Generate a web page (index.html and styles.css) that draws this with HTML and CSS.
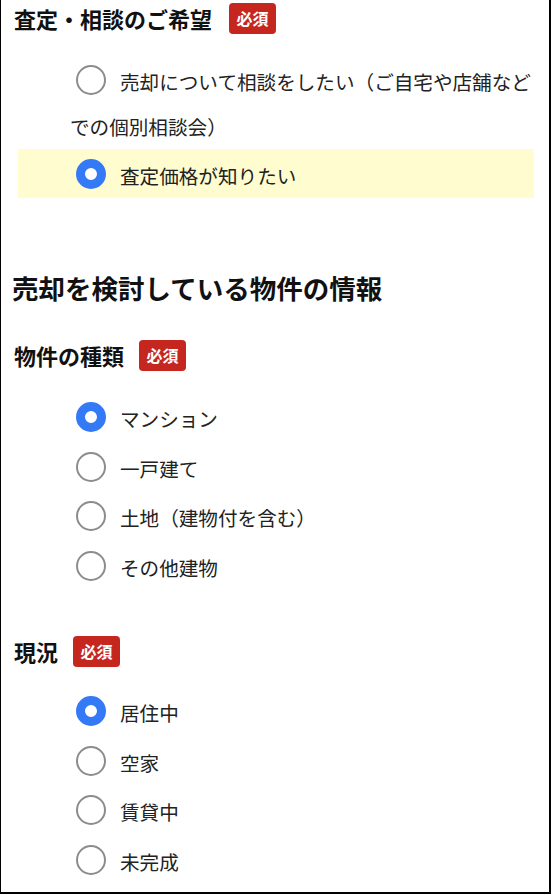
FILE: index.html
```html
<!DOCTYPE html>
<html lang="ja">
<head>
<meta charset="utf-8">
<link rel="stylesheet" href="styles.css">
</head>
<body>
<div class="page">
  <div class="group group-first">
    <div class="title-row">
      <span class="title">査定・相談のご希望</span>
      <span class="badge">必須</span>
    </div>
    <div class="options">
      <label class="option"><input type="radio" name="q1">売却について相談をしたい（ご自宅や店舗などでの個別相談会）</label>
      <label class="option is-selected"><input type="radio" name="q1" checked>査定価格が知りたい</label>
    </div>
  </div>

  <h2 class="section-title">売却を検討している物件の情報</h2>

  <div class="group">
    <div class="title-row">
      <span class="title">物件の種類</span>
      <span class="badge">必須</span>
    </div>
    <div class="options">
      <label class="option"><input type="radio" name="q2" checked>マンション</label>
      <label class="option"><input type="radio" name="q2">一戸建て</label>
      <label class="option"><input type="radio" name="q2">土地（建物付を含む）</label>
      <label class="option"><input type="radio" name="q2">その他建物</label>
    </div>
  </div>

  <div class="group group-status">
    <div class="title-row">
      <span class="title">現況</span>
      <span class="badge">必須</span>
    </div>
    <div class="options">
      <label class="option"><input type="radio" name="q3" checked>居住中</label>
      <label class="option"><input type="radio" name="q3">空家</label>
      <label class="option"><input type="radio" name="q3">賃貸中</label>
      <label class="option"><input type="radio" name="q3">未完成</label>
    </div>
  </div>
</div>
</body>
</html>
```

FILE: styles.css
```css
html, body {
  margin: 0;
  padding: 0;
  background: #fff;
}

body {
  font-family: "Noto Sans CJK JP", "Noto Sans", sans-serif;
  color: #111;
}

.page {
  width: 551px;
  height: 894px;
  box-sizing: border-box;
  border-left: 1px solid #000;
  border-right: 2px solid #000;
  border-bottom: 2px solid #000;
  padding-top: 3px;
  overflow: hidden;
}

.title-row {
  display: flex;
  align-items: center;
  gap: 15px;
  padding-left: 13px;
  height: 31px;
}

.title {
  font-size: 22px;
  font-weight: 700;
  line-height: 31px;
  color: #111;
}

.badge {
  display: inline-block;
  background: #c5271f;
  color: #fff;
  font-size: 16px;
  font-weight: 700;
  line-height: 31px;
  height: 31px;
  padding: 0 7.5px;
  border-radius: 4px;
}

.group-first .title-row {
  gap: 17px;
}

.options {
  margin: 21px 15px 0 17px;
}

.option {
  display: block;
  padding-left: 52px;
  font-size: 19.6px;
  line-height: 44px;
  color: #222;
}

.option.is-selected {
  background: #fffdd0;
}

.option input {
  -webkit-appearance: none;
  appearance: none;
  display: inline-block;
  box-sizing: border-box;
  width: 30px;
  height: 30px;
  margin: 10px 14px 9.5px 6px;
  border: 2px solid #8c8c8c;
  border-radius: 50%;
  background: #fff;
  vertical-align: -14.5px;
}

.option input:checked {
  border: 9px solid #347af6;
}

.section-title {
  margin: 72px 0 0;
  padding-left: 11px;
  font-size: 26.5px;
  font-weight: 700;
  line-height: 36px;
  color: #111;
}

.section-title + .group {
  margin-top: 34px;
}

.group-status {
  margin-top: 46px;
}

.group-status .options {
  margin-top: 19px;
}
```
